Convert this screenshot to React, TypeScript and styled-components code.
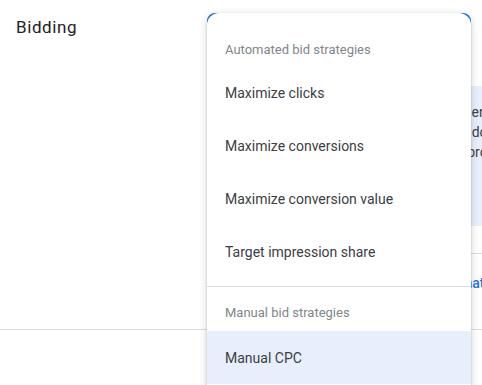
import React from 'react'
import styled, { createGlobalStyle } from 'styled-components'

const GlobalStyle = createGlobalStyle`
  html {
    overflow: hidden;
  }

  body {
    margin: 0;
    padding: 0;
    min-height: 100vh;
    background: #ffffff;
    font-family: Roboto, "Liberation Sans", Arial, sans-serif;
    color: #3c4043;
  }
`;

interface Group {
  title: string;
  options: string[];
}

const groups: Group[] = [
  {
    title: 'Automated bid strategies',
    options: [
      'Maximize clicks',
      'Maximize conversions',
      'Maximize conversion value',
      'Target impression share',
    ],
  },
  {
    title: 'Manual bid strategies',
    options: ['Manual CPC'],
  },
];

const selected = 'Manual CPC';

const App = () => {
  return (
    <Page>
      <GlobalStyle />
      <Section>
        <Label>Bidding</Label>
        <Content>
          <SelectWrap>
            <SelectField />
            <Menu role="listbox">
              {groups.map((group, i) => (
                <MenuGroup key={group.title} $divided={i > 0}>
                  <GroupTitle $divided={i > 0}>{group.title}</GroupTitle>
                  {group.options.map((option) => (
                    <Option key={option} $active={option === selected}>
                      {option}
                    </Option>
                  ))}
                </MenuGroup>
              ))}
            </Menu>
          </SelectWrap>
          <InfoBox>
            <InfoLine>The bid strategy sets bids in auctions. Here:</InfoLine>
            <InfoLine>Choose one that suits your goals. If you don't</InfoLine>
            <InfoLine>know which one to try, we can help you proceed.</InfoLine>
          </InfoBox>
          <Divider />
          <LinkRow>
            <TextLink href="#">Learn more about smart bidding and what works</TextLink>
          </LinkRow>
        </Content>
      </Section>
    </Page>
  )
}

const Page = styled.div`
  position: relative;
  min-height: 385px;
  overflow: hidden;
`;

const Section = styled.section`
  display: grid;
  grid-template-columns: 207px 1fr;
  padding-top: 13px;
  border-bottom: 1px solid #dadce0;
`;

const Label = styled.div`
  padding-left: 16px;
  font-size: 17px;
  line-height: 28px;
  letter-spacing: 0.6px;
  color: #202124;
`;

const Content = styled.div`
  display: flex;
  flex-direction: column;
  min-width: 0;
  padding-bottom: 36px;
`;

const SelectWrap = styled.div`
  position: relative;
  width: 264px;
  z-index: 2;
`;

const SelectField = styled.div`
  height: 56px;
  box-sizing: border-box;
  border: 2px solid #1a73e8;
  border-radius: 8px;
  background: #ffffff;
`;

const Menu = styled.div`
  position: absolute;
  top: 0;
  left: 0;
  width: 264px;
  padding: 9px 0 8px;
  background: #ffffff;
  border-radius: 12px 12px 4px 4px;
  box-shadow: 0 1px 2px rgba(60, 64, 67, 0.3), 0 2px 6px 2px rgba(60, 64, 67, 0.15);
`;

const MenuGroup = styled.div<{ $divided: boolean }>`
  display: flex;
  flex-direction: column;
  border-top: ${({ $divided }) => ($divided ? '1px solid #dadce0' : 'none')};
  padding-bottom: ${({ $divided }) => ($divided ? '0' : '8px')};
`;

const GroupTitle = styled.div<{ $divided: boolean }>`
  display: flex;
  align-items: flex-end;
  height: 44px;
  box-sizing: border-box;
  padding: 0 18px ${({ $divided }) => ($divided ? '10px' : '8px')};
  font-size: 13px;
  line-height: 16px;
  color: #80868b;
`;

const Option = styled.div<{ $active: boolean }>`
  display: flex;
  align-items: center;
  height: 53px;
  padding: 0 18px;
  font-size: 14px;
  color: #3c4043;
  background: ${({ $active }) => ($active ? '#e8effc' : 'transparent')};
  cursor: pointer;
`;

const InfoBox = styled.div`
  margin-top: 17px;
  height: 140px;
  box-sizing: border-box;
  padding: 16px 16px 0;
  background: #e8effc;
`;

const InfoLine = styled.div`
  font-size: 14px;
  line-height: 20px;
  white-space: nowrap;
  color: #3c4043;
`;

const Divider = styled.div`
  margin-top: 27px;
  height: 1px;
  background: #dadce0;
`;

const LinkRow = styled.div`
  margin-top: 19px;
  padding-left: 16px;
  line-height: 20px;
  white-space: nowrap;
`;

const TextLink = styled.a`
  font-size: 14px;
  font-weight: 500;
  color: #1a73e8;
  text-decoration: none;
`;

export default App
